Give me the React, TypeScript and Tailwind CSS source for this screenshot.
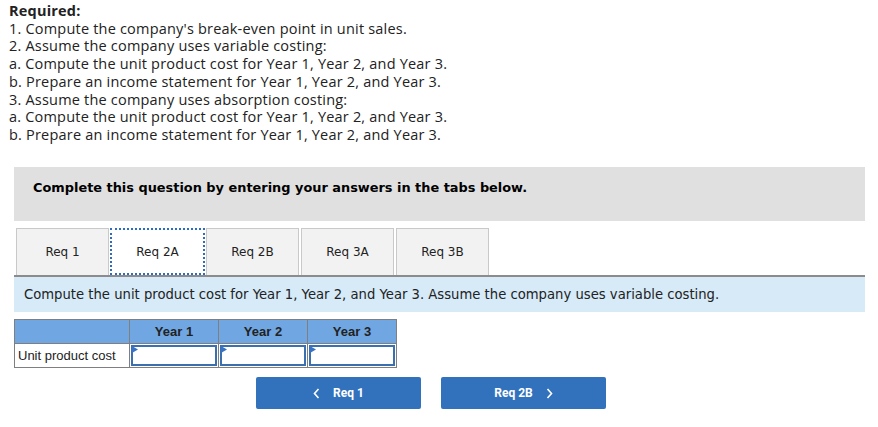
import React from "react";

const tabs = ["Req 1", "Req 2A", "Req 2B", "Req 3A", "Req 3B"];

function InputCell() {
  return (
    <td className="relative border border-[#7f7f7f] p-0 h-[24px]">
      <div className="absolute inset-[1px] border-2 border-[#3a6fb0] bg-white"></div>
      <svg className="absolute left-[2px] top-[2px]" width="6" height="7" viewBox="0 0 6 7">
        <polygon points="0,0 6,3.5 0,7" fill="#3b73c4" />
      </svg>
    </td>
  );
}

export default function App() {
  return (
    <div className="w-[878px] h-[427px] bg-white relative overflow-hidden">
      <div
        className="pl-[9px] pt-[2px] text-[14.5px] leading-[17.7px] tracking-[0.2px] text-[#222]"
        style={{ fontFamily: '"Open Sans", "Noto Sans", sans-serif' }}
      >
        <div className="font-bold">Required:</div>
        <div>1. Compute the company's break-even point in unit sales.</div>
        <div>2. Assume the company uses variable costing:</div>
        <div>a. Compute the unit product cost for Year 1, Year 2, and Year 3.</div>
        <div>b. Prepare an income statement for Year 1, Year 2, and Year 3.</div>
        <div>3. Assume the company uses absorption costing:</div>
        <div>a. Compute the unit product cost for Year 1, Year 2, and Year 3.</div>
        <div>b. Prepare an income statement for Year 1, Year 2, and Year 3.</div>
      </div>

      <div className="absolute left-[14px] top-[167px] w-[851px]">
        <div
          className="h-[54px] bg-[#e0e0e0] pl-[19px] pt-[13px] leading-[16px] text-[12.9px] font-bold text-black"
          style={{ fontFamily: '"DejaVu Sans", Verdana, sans-serif' }}
        >
          Complete this question by entering your answers in the tabs below.
        </div>

        <div
          className="flex gap-[2px] pl-[2px] mt-[7px] h-[47px]"
          style={{ fontFamily: '"DejaVu Sans", Verdana, sans-serif' }}
        >
          {tabs.map((t, i) =>
            i === 1 ? (
              <div
                key={t}
                className="w-[95px] -mx-[1px] h-[47px] bg-white border-2 border-dotted border-[#2f6cc0] flex items-center justify-center text-[12px] text-[#222]"
              >
                {t}
              </div>
            ) : (
              <div
                key={t}
                className="w-[93px] h-[47px] bg-[#f2f2f2] border border-[#c9c9c9] border-b-0 flex items-center justify-center text-[12px] text-[#222]"
              >
                {t}
              </div>
            )
          )}
        </div>

        <div
          className="h-[37px] bg-[#d6eaf8] border-t-2 border-[#8c8c8c] pl-[10px] flex items-center text-[13.2px] text-[#222]"
          style={{ fontFamily: '"DejaVu Sans", Verdana, sans-serif' }}
        >
          Compute the unit product cost for Year 1, Year 2, and Year 3. Assume the company uses variable costing.
        </div>

        <table
          className="mt-[7px] border-collapse"
          style={{ fontFamily: '"Liberation Sans", Arial, sans-serif' }}
        >
          <tbody>
            <tr className="h-[24px] bg-[#70a7e3]">
              <td className="w-[115px] border border-[#7f7f7f]"></td>
              <td className="w-[89px] border border-[#7f7f7f] text-center text-[13px] font-bold text-[#222]">Year 1</td>
              <td className="w-[89px] border border-[#7f7f7f] text-center text-[13px] font-bold text-[#222]">Year 2</td>
              <td className="w-[89px] border border-[#7f7f7f] text-center text-[13px] font-bold text-[#222]">Year 3</td>
            </tr>
            <tr className="h-[24px]">
              <td className="border border-[#7f7f7f] pl-[3px] text-[13px] text-[#222] whitespace-nowrap">Unit product cost</td>
              <InputCell />
              <InputCell />
              <InputCell />
            </tr>
          </tbody>
        </table>
      </div>

      <div
        className="absolute left-[256px] top-[377px] flex gap-[20px] text-white text-[12px] font-bold"
        style={{ fontFamily: 'Roboto, "Liberation Sans", sans-serif' }}
      >
        <div className="w-[165px] h-[32px] bg-[#3272bd] rounded-[2px] flex items-center justify-center gap-[13px]">
          <svg width="7" height="11" viewBox="0 0 7 11">
            <polyline points="5.5,1 1.5,5.5 5.5,10" fill="none" stroke="white" strokeWidth="1.6" />
          </svg>
          <span>Req 1</span>
        </div>
        <div className="w-[165px] h-[32px] bg-[#3272bd] rounded-[2px] flex items-center justify-center gap-[13px]">
          <span>Req 2B</span>
          <svg width="7" height="11" viewBox="0 0 7 11">
            <polyline points="1.5,1 5.5,5.5 1.5,10" fill="none" stroke="white" strokeWidth="1.6" />
          </svg>
        </div>
      </div>
    </div>
  );
}
